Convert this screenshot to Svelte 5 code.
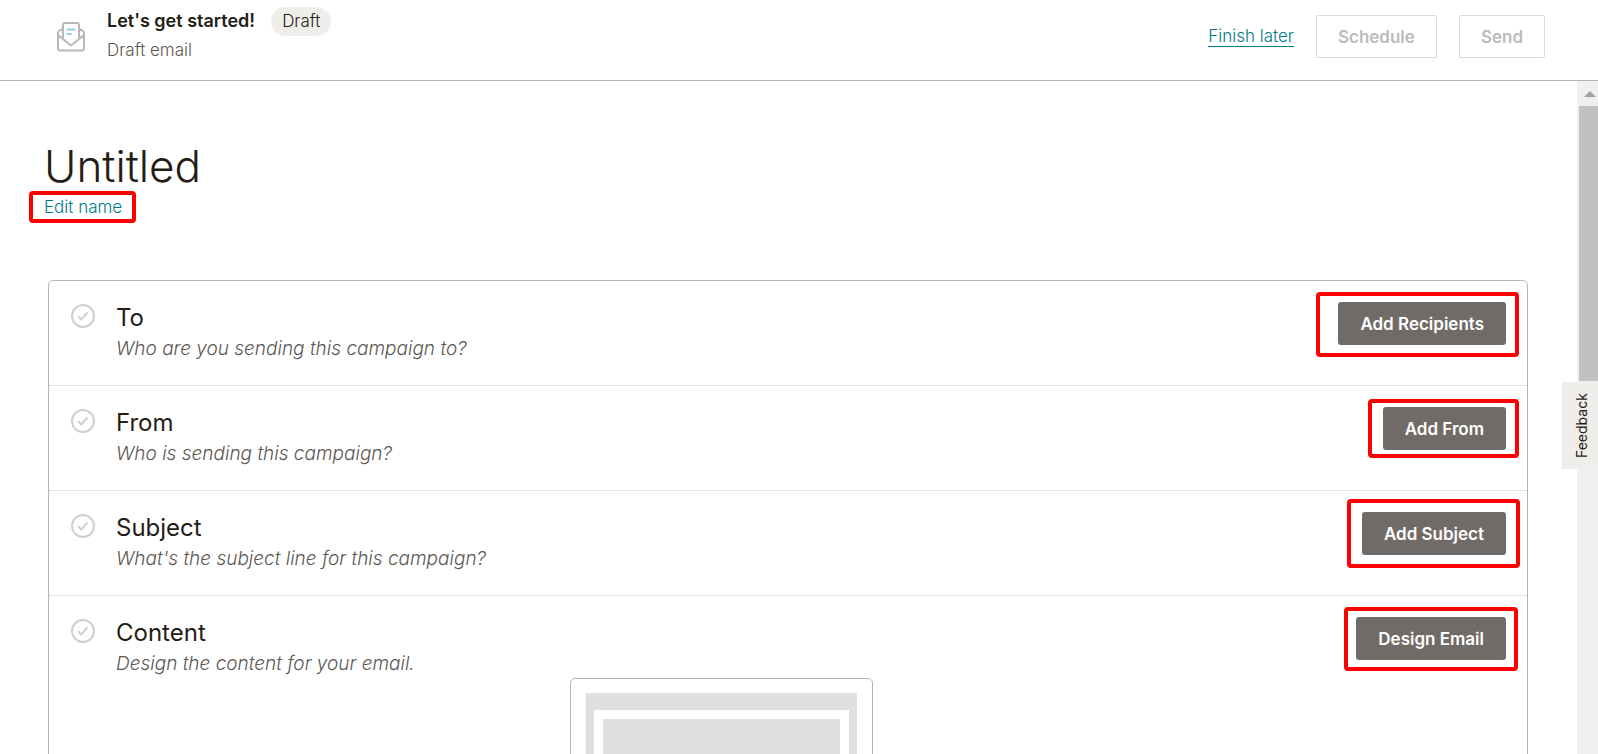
<script lang="ts">
    let title = 'Untitled';

    // outline = inset of the red highlight around the button
    const steps = [
        { name: 'To', hint: 'Who are you sending this campaign to?', action: 'Add Recipients', outline: '-10px -13px -12px -22px' },
        { name: 'From', hint: 'Who is sending this campaign?', action: 'Add From', outline: '-8px -13px -8px -15px' },
        { name: 'Subject', hint: "What's the subject line for this campaign?", action: 'Add Subject', outline: '-13px -14px -13px -15px' },
        { name: 'Content', hint: 'Design the content for your email.', action: 'Design Email', outline: '-10px -12px -11px -12px', preview: true }
    ];
</script>

<div class="page">
    <header class="topbar">
        <svg class="mail-icon" viewBox="0 0 28 30" aria-hidden="true">
            <path class="line" d="M6 16V3a2 2 0 0 1 2-2h12a2 2 0 0 1 2 2v13M6 6.500L2.500 8.500A3 3 0 0 0 1 11v15.500A2 2 0 0 0 3 28.500h22a2 2 0 0 0 2-2V11a3 3 0 0 0-1.500-2.500L22 6.500M1 13l11 9a3 3 0 0 0 4 0L27 13" />
            <path class="text" d="M10.500 7.500h7M10.500 12h3.500" />
        </svg>
        <div class="campaign">
            <div class="campaign-name">
                <strong>Let's get started!</strong>
                <span class="badge">Draft</span>
            </div>
            <div class="campaign-type">Draft email</div>
        </div>
        <div class="actions">
            <a href="#later">Finish later</a>
            <button class="btn-outline" disabled>Schedule</button>
            <button class="btn-outline" disabled>Send</button>
        </div>
    </header>

    <div class="body">
        <main>
            <h1>{title}</h1>
            <a class="edit-name" href="#name">Edit name</a>

            <div class="checklist">
                {#each steps as step}
                    <section class="step">
                        <div class="step-row">
                            <svg class="check" viewBox="0 0 24 24" aria-hidden="true">
                                <circle cx="12" cy="12" r="11" />
                                <path d="M7.200 12.300l3 3.200 6.300-7" />
                            </svg>
                            <div class="step-text">
                                <h2>{step.name}</h2>
                                <p>{step.hint}</p>
                            </div>
                            <div class="step-action">
                                <button class="btn-solid">{step.action}</button>
                                <span class="outline" style:inset={step.outline}></span>
                            </div>
                        </div>
                        {#if step.preview}
                            <div class="preview">
                                <div class="preview-page">
                                    <div class="preview-frame"></div>
                                </div>
                            </div>
                        {/if}
                    </section>
                {/each}
            </div>
        </main>
        <div class="scrollbar" aria-hidden="true">
            <span class="arrow"></span>
            <span class="thumb"></span>
        </div>
    </div>

    <button class="feedback">Feedback</button>
</div>

<style>
:global(body) {
    margin: 0;
}

.page {
    position: relative;
    display: flex;
    flex-direction: column;
    height: 100vh;
    overflow: hidden;
    background: #fff;
    color: #241c15;
    font-family: Inter, "Liberation Sans", sans-serif;
    font-size: 17px;
    font-weight: 300;
}

button {
    font-family: inherit;
}

h1, h2, p {
    margin: 0;
    font-weight: 300;
}

a {
    color: #007c89;
}

.topbar {
    display: flex;
    align-items: flex-start;
    padding: 7px 53px 16px 57px;
    border-bottom: 1px solid #b5b5b5;
}

.mail-icon {
    width: 28px;
    height: 30px;
    margin: 15px 22px 0 0;
    fill: none;
    stroke: #bdb8b4;
    stroke-width: 2;
    stroke-linecap: round;
    stroke-linejoin: round;
}

.mail-icon .text {
    stroke: #93cbe6;
}

.campaign {
    flex: 1;
}

.campaign-name {
    display: flex;
    align-items: flex-start;
    gap: 16px;
    height: 29px;
}

.campaign-name strong {
    font-size: 18px;
    font-weight: 600;
    line-height: 27px;
}

.badge {
    height: 29px;
    padding: 0 11px;
    border-radius: 15px;
    background: #efeeea;
    line-height: 28px;
}

.campaign-type {
    color: #5d5752;
    line-height: 28px;
}

.actions {
    display: flex;
    align-items: center;
    gap: 22px;
    padding-top: 8px;
}

.actions a {
    border-bottom: 1px solid #007c89;
    text-decoration: none;
    line-height: 19px;
}

.btn-outline {
    height: 43px;
    padding: 0 21px;
    border: 1px solid #dbd9d9;
    border-radius: 2px;
    background: #fff;
    color: #bdbbb9;
    font-size: 17px;
    font-weight: 600;
}

.body {
    display: flex;
    flex: 1;
    min-height: 0;
}

main {
    flex: 1;
    padding: 60px 49px 0 48px;
    overflow: hidden;
}

h1 {
    margin-left: -4px;
    font-size: 44px;
    line-height: 50px;
}

.edit-name {
    display: inline-block;
    margin-left: -19px;
    padding: 0 10px 0 11px;
    border: 4px solid #ff0000;
    border-radius: 4px;
    line-height: 24px;
    text-decoration: none;
}

.checklist {
    margin-top: 57px;
    border: 1px solid #b5b5b5;
    border-radius: 5px;
}

.step + .step {
    border-top: 1px dotted #cfcfcf;
}

.step-row {
    display: flex;
    align-items: flex-start;
    padding: 21px 21px 0 22px;
}

.check {
    width: 24px;
    height: 24px;
    margin: 2px 21px 0 0;
    fill: none;
    stroke: #d0d0d0;
    stroke-width: 2;
}

.step-text {
    flex: 1;
    height: 82px;
    padding-top: 1px;
}

h2 {
    font-size: 24px;
    font-weight: 400;
    line-height: 30px;
}

.step-text p {
    color: #5d5752;
    font-size: 19px;
    font-style: italic;
    line-height: 32px;
}

.step-action {
    position: relative;
}

.btn-solid {
    display: block;
    height: 43px;
    padding: 0 22px;
    border: 0;
    border-radius: 3px;
    background: #716b67;
    color: #fff;
    font-size: 17px;
    font-weight: 600;
}

.outline {
    position: absolute;
    border: 4px solid #ff0000;
    border-radius: 4px;
    pointer-events: none;
}

.preview {
    box-sizing: border-box;
    width: 303px;
    height: 360px;
    margin: -22px auto 24px 521px;
    padding: 14px 15px;
    border: 1px solid #b5b5b5;
    border-radius: 5px;
}

.preview-page {
    box-sizing: border-box;
    height: 100%;
    padding: 17px 8px;
    background: #dfdfdf;
}

.preview-frame {
    box-sizing: border-box;
    height: 100%;
    border: 9px solid #fff;
}

.scrollbar {
    display: flex;
    flex-direction: column;
    width: 21px;
    background: #f0f0f0;
}

.arrow {
    margin: 10px 0 9px 7px;
    width: 0;
    border: 6px solid transparent;
    border-top: 0;
    border-bottom-color: #a3a3a3;
}

.thumb {
    height: 275px;
    margin-left: 2px;
    background: #c1c1c1;
}

.feedback {
    position: absolute;
    top: 382px;
    right: 0;
    width: 36px;
    height: 87px;
    padding: 0 4px 0 0;
    border: 0;
    background: #efeeea;
    color: #241c15;
    font-size: 14px;
    line-height: 32px;
    writing-mode: vertical-rl;
    rotate: 180deg;
}
</style>
